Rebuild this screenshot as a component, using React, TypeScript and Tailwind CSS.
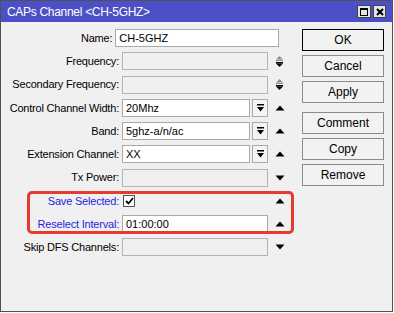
import React from 'react';

type Kind = 'text' | 'disabled' | 'dropdown' | 'check';
type Arrow = 'updown' | 'up' | 'down' | null;

const ROWS: { label: string; kind: Kind; value?: string; arrow: Arrow; wide?: boolean; blue?: boolean }[] = [
  { label: 'Name:', kind: 'text', value: 'CH-5GHZ', arrow: null, wide: true },
  { label: 'Frequency:', kind: 'disabled', arrow: 'updown' },
  { label: 'Secondary Frequency:', kind: 'disabled', arrow: 'updown' },
  { label: 'Control Channel Width:', kind: 'dropdown', value: '20Mhz', arrow: 'up' },
  { label: 'Band:', kind: 'dropdown', value: '5ghz-a/n/ac', arrow: 'up' },
  { label: 'Extension Channel:', kind: 'dropdown', value: 'XX', arrow: 'up' },
  { label: 'Tx Power:', kind: 'disabled', arrow: 'down' },
  { label: 'Save Selected:', kind: 'check', arrow: 'up', blue: true },
  { label: 'Reselect Interval:', kind: 'text', value: '01:00:00', arrow: 'up', blue: true },
  { label: 'Skip DFS Channels:', kind: 'disabled', arrow: 'down' },
];

const BUTTONS = [['OK', 'Cancel', 'Apply'], ['Comment', 'Copy', 'Remove']];

function ArrowIcon({ type }: { type: Arrow }) {
  if (type === 'updown') {
    return (
      <svg width="9" height="13" viewBox="0 0 9 13">
        <polygon points="4.5,1 8,4.5 1,4.5" fill="#8f8f8f" />
        <rect x="1" y="5" width="7" height="1" fill="#8f8f8f" />
        <rect x="1" y="7" width="7" height="1.5" fill="#000" />
        <polygon points="1,8.5 8,8.5 4.5,12" fill="#000" />
      </svg>
    );
  }
  if (type === 'up') {
    return (
      <svg width="10" height="6" viewBox="0 0 10 6">
        <polygon points="5,0.5 9.5,5.5 0.5,5.5" fill="#000" />
      </svg>
    );
  }
  if (type === 'down') {
    return (
      <svg width="10" height="6" viewBox="0 0 10 6">
        <polygon points="0.5,0.5 9.5,0.5 5,5.5" fill="#000" />
      </svg>
    );
  }
  return null;
}

function Field({ kind, value, wide }: { kind: Kind; value?: string; wide?: boolean }) {
  if (kind === 'check') {
    return (
      <div className="w-[146px] h-[18px] flex items-center pl-[1px]">
        <div className="w-[12px] h-[12px] bg-white border border-[#555] flex items-center justify-center">
          <svg width="9" height="8" viewBox="0 0 9 8">
            <path d="M1 4 L3.5 6.5 L8 1" stroke="#000" strokeWidth="1.8" fill="none" />
          </svg>
        </div>
      </div>
    );
  }
  if (kind === 'dropdown') {
    return (
      <div className="w-[146px] h-[18px] flex gap-[2px]">
        <div className="flex-1 h-full bg-white border border-[#a9a9a9] pl-[3px] flex items-center">{value}</div>
        <div className="w-[16px] h-full bg-[#f4f4f4] border border-[#a9a9a9] flex items-center justify-center">
          <svg width="7" height="8" viewBox="0 0 7 8">
            <rect x="0" y="0" width="7" height="1.5" fill="#000" />
            <polygon points="0,3 7,3 3.5,7.5" fill="#000" />
          </svg>
        </div>
      </div>
    );
  }
  return (
    <div
      className={`${wide ? 'w-[164px]' : 'w-[146px]'} h-[18px] border pl-[3px] flex items-center ${
        kind === 'disabled' ? 'bg-[#f0f0f0] border-[#b4b4b4]' : 'bg-white border-[#a9a9a9]'
      }`}
    >
      {value}
    </div>
  );
}

export default function App() {
  return (
    <div className="w-[394px] h-[313px] bg-white font-['Liberation_Sans',Arial,sans-serif] text-[11px] text-black">
      <div className="relative w-[393px] h-[312px] border border-[#505050] bg-[#f0f0f0] flex flex-col">
        {/* Title bar */}
        <div className="h-[21px] bg-[#4b50c8] flex items-center justify-between pl-[6px] pr-[6px]">
          <span className="text-white text-[12px] tracking-[-0.3px]">CAPs Channel &lt;CH-5GHZ&gt;</span>
          <div className="flex gap-[2px]">
            <div className="w-[14px] h-[13px] bg-[#e3e3e3] border border-[#444] flex items-center justify-center">
              <div className="w-[8px] h-[8px] border border-black border-t-2" />
            </div>
            <div className="w-[13px] h-[13px] bg-[#e3e3e3] border border-[#444] flex items-center justify-center">
              <svg width="8" height="8" viewBox="0 0 8 8">
                <path d="M1 1 L7 7 M7 1 L1 7" stroke="#000" strokeWidth="2" />
              </svg>
            </div>
          </div>
        </div>

        {/* Body */}
        <div className="flex pt-[7px]">
          <div className="w-[300px] flex flex-col gap-[5.25px]">
            {ROWS.map((r) => (
              <div key={r.label} className="flex items-center h-[18px]">
                <div className={`w-[118px] text-right tracking-[-0.2px] ${r.blue ? 'text-[#1e1ee6]' : ''}`}>{r.label}</div>
                <div className="ml-[3px]">
                  <Field kind={r.kind} value={r.value} wide={r.wide} />
                </div>
                <div className="w-[23px] flex items-center justify-center">
                  <ArrowIcon type={r.arrow} />
                </div>
              </div>
            ))}
          </div>

          <div className="w-[82px] ml-[1px] flex flex-col gap-[9px]">
            {BUTTONS.map((group, gi) => (
              <div key={gi} className="flex flex-col gap-[4px]">
                {group.map((b) => (
                  <div
                    key={b}
                    className={`h-[22px] flex items-center justify-center text-[12px] bg-[#f2f2f2] border ${
                      b === 'OK' ? 'border-black' : 'border-[#8c8c8c]'
                    }`}
                  >
                    {b}
                  </div>
                ))}
              </div>
            ))}
          </div>
        </div>

        {/* Annotation */}
        <div className="absolute left-[26px] top-[190px] w-[267px] h-[43px] border-[3px] border-[#e63a30] rounded-[5px]" />
      </div>
    </div>
  );
}
